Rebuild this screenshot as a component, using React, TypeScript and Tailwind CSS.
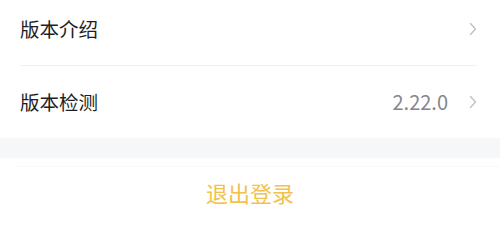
import React from "react";

const Chevron = () => (
  <svg width="8" height="14" viewBox="0 0 8 14" fill="none" className="shrink-0">
    <polyline points="1.5,1.5 6.5,7 1.5,12.5" stroke="#c2c2c4" strokeWidth="1.4" strokeLinecap="round" strokeLinejoin="round" />
  </svg>
);

interface Row {
  label: string;
  value?: string;
}

const rows: Row[] = [{ label: "版本介绍" }, { label: "版本检测", value: "2.22.0" }];

export default function App() {
  return (
    <div
      className="w-[500px] h-[221px] overflow-hidden bg-white"
      style={{ fontFamily: '"Noto Sans CJK SC", "Noto Sans", sans-serif' }}
    >
      <div className="-mt-[7px] flex flex-col">
        {rows.map((row, i) => (
          <div key={row.label} className="flex flex-col">
            <div className="h-[72px] pl-5 pr-[23px] flex items-center justify-between">
              <span className="text-[19.5px] text-[#1f1f1f]">{row.label}</span>
              <div className="flex items-center gap-[21px]">
                {row.value && <span className="text-[20px] text-[#86868a]">{row.value}</span>}
                <Chevron />
              </div>
            </div>
            {i === 0 && <div className="h-px ml-5 mr-[23px] bg-[#f1f1f3]" />}
          </div>
        ))}
        <div className="h-[20px] bg-[#f6f7f9]" />
        <div className="pt-[8px] bg-white">
          <div className="ml-4 border-t border-[#f9f9f9] h-[52px] flex items-center justify-center pr-4">
            <span className="text-[22px] text-[#f2c24a]">退出登录</span>
          </div>
        </div>
      </div>
    </div>
  );
}
